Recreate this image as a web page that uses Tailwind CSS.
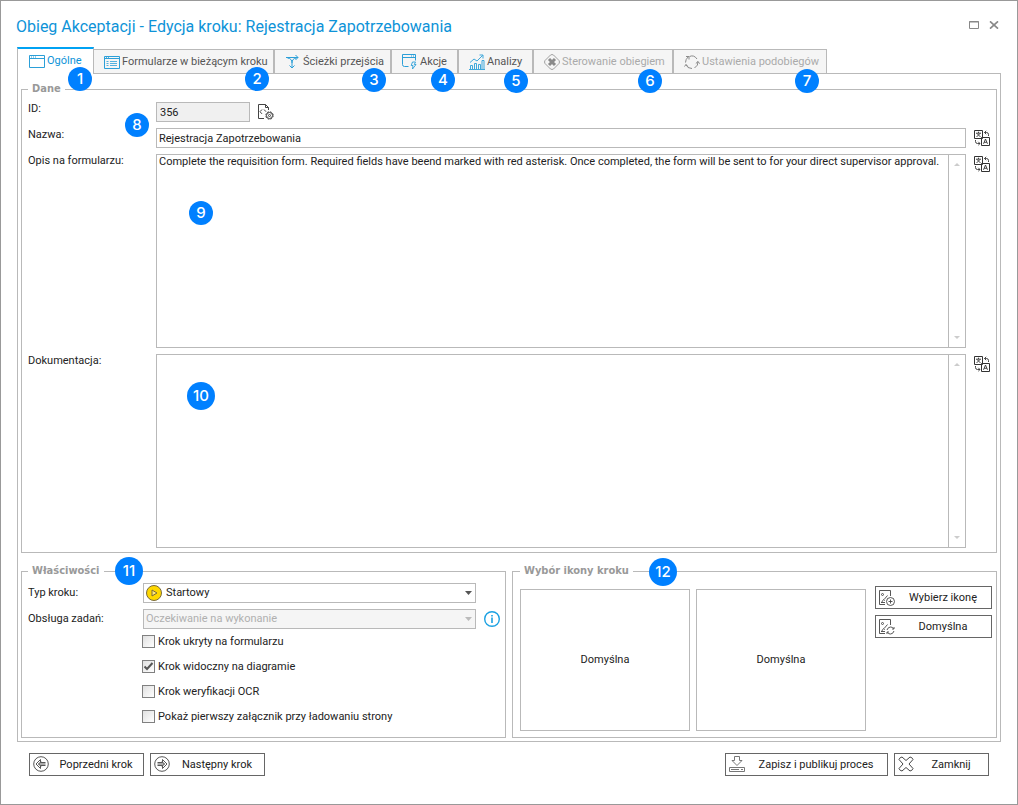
<!DOCTYPE html>
<html lang="pl">
<head>
<meta charset="utf-8">
<title>Obieg Akceptacji - Edycja kroku</title>
<script src="https://cdn.jsdelivr.net/npm/@tailwindcss/browser@4"></script>
</head>
<body class="bg-white">
<svg class="hidden" aria-hidden="true">
  <symbol id="translate" viewBox="0 0 16 16">
    <g fill="none" stroke="currentColor">
      <path d="M.5.5h8v8h-8zM7.500 7.500h8v8h-8z" fill="#fff"/>
      <path stroke-width=".9" d="M2 3.200h5M4.500 1.700V3M3 3.500 6.500 7M6 3.500 2.500 7M9.500 13.800l2-4.800 2 4.800M10.200 12.300h2.600"/>
      <path stroke-width=".9" d="M10.500 2.500h2q2 0 2 2V6M12.200.8 10.500 2.500l1.700 1.700M1.500 10v1.500q0 2 2 2H6M4.300 11.800 6 13.500l-1.700 1.700"/>
    </g>
  </symbol>
</svg>
<div class="flex min-h-screen flex-col border border-[#999] bg-white px-[15px] font-['Roboto',sans-serif] text-[11px] leading-[14px] text-[#222]">
  <header class="flex h-[46px] items-center justify-between pt-1">
    <h1 class="pt-0.5 text-base text-[#0e93d8]">Obieg Akceptacji - Edycja kroku: Rejestracja Zapotrzebowania</h1>
    <div class="mr-0.5 mb-0.5 flex gap-2 text-[#888]">
      <button aria-label="Maksymalizuj" class="grid size-3 place-items-center"><svg class="h-2 w-[10px]" viewBox="0 0 10 8" fill="none" stroke="currentColor"><path d="M.5.5h9v7h-9zM0 1h10"/></svg></button>
      <button aria-label="Zamknij okno" class="grid size-3 place-items-center"><svg class="h-2 w-[10px]" viewBox="0 0 10 8" fill="none" stroke="currentColor" stroke-width="1.600"><path d="M1 .3l8 7.400M9 .3l-8 7.400"/></svg></button>
    </div>
  </header>

  <nav role="tablist" class="mx-px flex items-end whitespace-nowrap text-[#555]">
    <button role="tab" aria-selected="true" class="relative z-10 -mb-px flex h-[27px] w-[77px] items-center gap-0.5 border-x border-t-2 border-x-[#b9b9b9] border-t-[#00a2f3] bg-white pb-0.5 pl-[11px] text-[#0e93d8]">
      <svg class="size-4" viewBox="0 0 16 16" fill="none" stroke="#2b9fd8"><path d="M.5 2.500h15v12H.5zM.5 5.500h15"/><path d="M2 4h1M4 4h1M6 4h1"/></svg>
      <span>Ogólne</span>
      <b class="absolute top-[18px] left-[50px] grid size-6 place-items-center rounded-full bg-[#0080ff] font-['Inter',sans-serif] text-[15px] font-medium text-white">1</b>
    </button>
    <button role="tab" class="relative flex h-6 w-[180px] items-center gap-0.5 border-t border-r border-[#b9b9b9] bg-[#f5f5f5] pl-[10px]">
      <svg class="size-4" viewBox="0 0 16 16" fill="none" stroke="#2b9fd8"><path d="M.5 2.500h15v12H.5zM.5 4.500h15"/><path stroke-width=".8" d="M2 3.500h1M4 3.500h1M2.500 7.500h2M2.500 9.500h2M2.500 11.500h2M6 7.500h7M6 9.500h7M6 11.500h7"/></svg>
      <span>Formularze w bieżącym kroku</span>
      <b class="absolute top-[17px] left-[151px] z-20 grid size-6 place-items-center rounded-full bg-[#0080ff] font-['Inter',sans-serif] text-[15px] font-medium text-white">2</b>
    </button>
    <button role="tab" class="relative flex h-6 w-[117px] items-center gap-0.5 border-x border-t border-[#b9b9b9] bg-[#f5f5f5] pl-[10px]">
      <svg class="size-4" viewBox="0 0 16 16" fill="none" stroke="#2b9fd8"><path d="M1 3.500h12M10.500 1 13 3.500 10.500 6M2.500 4Q7 4.500 7 9v5M4.500 11.500 7 14l2.500-2.500M11.500 4Q7 4.500 7 9"/></svg>
      <span>Ścieżki przejścia</span>
      <b class="absolute top-[18px] left-[87px] z-20 grid size-6 place-items-center rounded-full bg-[#0080ff] font-['Inter',sans-serif] text-[15px] font-medium text-white">3</b>
    </button>
    <button role="tab" class="relative flex h-6 w-[67px] items-center gap-0.5 border-x border-t border-[#b9b9b9] bg-[#f5f5f5] pl-[10px]">
      <svg class="size-4" viewBox="0 0 16 16" fill="none" stroke="#2b9fd8"><path d="M6.500 12.500h-4q-2 0-2-2v-10h13v6M.5 3.500h13M9 2h1M11 2h1"/><path stroke-width=".9" d="M10.500 8h3l-1.200 2.500h1.700L10.500 15l.5-3.500H9.200z"/></svg>
      <span>Akcje</span>
      <b class="absolute top-[18px] left-[39px] z-20 grid size-6 place-items-center rounded-full bg-[#0080ff] font-['Inter',sans-serif] text-[15px] font-medium text-white">4</b>
    </button>
    <button role="tab" class="relative flex h-6 w-[75px] items-center gap-0.5 border-x border-t border-[#b9b9b9] bg-[#f5f5f5] pl-[10px]">
      <svg class="size-4" viewBox="0 0 16 16" fill="none" stroke="#2b9fd8" stroke-width=".9"><path d="M0 15.500h16M1.500 15v-3.500h2V15M5.500 15V9.500h2V15M9.500 15v-4.500h2V15M13 15V6.500h2V15M1 8.500l4-3.500 3 2 5.500-5.500M10.500 1h3.500v3.500"/></svg>
      <span>Analizy</span>
      <b class="absolute top-[19px] left-[45px] z-20 grid size-6 place-items-center rounded-full bg-[#0080ff] font-['Inter',sans-serif] text-[15px] font-medium text-white">5</b>
    </button>
    <button role="tab" class="relative flex h-6 w-[140px] items-center gap-0.5 border-x border-t border-[#b9b9b9] bg-[#f5f5f5] pl-[10px] text-[#aaa]">
      <svg class="size-4" viewBox="0 0 16 16" fill="none" stroke="#8a8a8a"><path stroke-width=".8" d="M6.500 1q1.500-1 3 0L15 6.500q1 1.500 0 3L9.500 15q-1.500 1-3 0L1 9.500q-1-1.500 0-3z"/><path d="M5 5l6 6M11 5l-6 6" stroke-width="3"/></svg>
      <span>Sterowanie obiegiem</span>
      <b class="absolute top-[19px] left-[104px] z-20 grid size-6 place-items-center rounded-full bg-[#0080ff] font-['Inter',sans-serif] text-[15px] font-medium text-white">6</b>
    </button>
    <button role="tab" class="relative flex h-6 w-[154px] items-center gap-0.5 border-x border-t border-[#b9b9b9] bg-[#f5f5f5] pl-[10px] text-[#aaa]">
      <svg class="size-4" viewBox="0 0 16 16" fill="none" stroke="#8a8a8a"><path d="M5.500 2.500Q10 .5 13 5M14 7.500q.5 4-3.500 6.500M8 14.500q-5 0-6-4M1.500 8.500q0-3 2.500-5.500M2 2.500h3v3M11.800 9.500 14 7.500l1.700 2.200M3.800 12.500 2 10.500l-1.500 2"/></svg>
      <span>Ustawienia podobiegów</span>
      <b class="absolute top-[19px] left-[121px] z-20 grid size-6 place-items-center rounded-full bg-[#0080ff] font-['Inter',sans-serif] text-[15px] font-medium text-white">7</b>
    </button>
  </nav>

  <main class="mx-px border border-[#b9b9b9] px-[3px] pt-2 pb-[3px]">
    <fieldset class="relative flex flex-col gap-1.5 border border-[#b9b9b9] px-1.5 pt-1.5 pb-1">
      <legend class="h-[14px] px-1 font-['DejaVu_Sans_Condensed','DejaVu_Sans',sans-serif] font-bold text-[#999]">Dane</legend>
      <div class="relative flex items-start">
        <label for="id" class="w-32">ID:</label>
        <input id="id" readonly value="356" class="h-5 w-[94px] border border-[#b9b9b9] bg-[#f0f0f0] px-[3px]">
        <button aria-label="Właściwości ID" class="mt-0.5 ml-2 text-[#444]"><svg class="size-4" viewBox="0 0 16 16" fill="none" stroke="currentColor"><path d="M6 14.500H.5V.5h7l3 3V6M7.500.5v3h3M4 5.500 2 7.700l2 2.200M6 5.500 8 7.700"/><circle cx="11.500" cy="11.500" r="3.700" stroke-dasharray="1.900 1"/><circle cx="11.500" cy="11.500" r="3"/><circle cx="11.500" cy="11.500" r="1"/></svg></button>
        <b class="absolute top-[11px] left-[97px] grid size-6 place-items-center rounded-full bg-[#0080ff] font-['Inter',sans-serif] text-[15px] font-medium text-white">8</b>
      </div>
      <div class="flex items-start">
        <label for="name" class="w-32">Nazwa:</label>
        <input id="name" value="Rejestracja Zapotrzebowania" class="h-5 min-w-0 flex-1 border border-[#b9b9b9] px-0.5">
        <button aria-label="Tłumacz nazwę" class="mt-0.5 ml-2 text-[#333]"><svg class="size-4"><use href="#translate"/></svg></button>
      </div>
      <div class="relative flex items-start">
        <label for="desc" class="w-32">Opis na formularzu:</label>
        <div class="flex h-[194px] flex-1 border border-[#b9b9b9]">
          <textarea id="desc" class="flex-1 resize-none overflow-hidden px-0.5">Complete the requisition form. Required fields have beend marked with red asterisk. Once completed, the form will be sent to for your direct supervisor approval.</textarea>
          <div class="flex w-[17px] flex-col items-center justify-between border-l border-[#b9b9b9] py-2 text-[#ccc]">
            <svg class="h-[3px] w-[6px]" viewBox="0 0 6 3" fill="currentColor"><path d="M0 3l3-3 3 3z"/></svg>
            <svg class="h-[3px] w-[6px]" viewBox="0 0 6 3" fill="currentColor"><path d="M0 0l3 3 3-3z"/></svg>
          </div>
        </div>
        <button aria-label="Tłumacz opis" class="mt-0.5 ml-2 text-[#333]"><svg class="size-4"><use href="#translate"/></svg></button>
        <b class="absolute top-[47px] left-[161px] grid size-6 place-items-center rounded-full bg-[#0080ff] font-['Inter',sans-serif] text-[15px] font-medium text-white">9</b>
      </div>
      <div class="relative flex items-start">
        <label for="docs" class="w-32">Dokumentacja:</label>
        <div class="flex h-[194px] flex-1 border border-[#b9b9b9]">
          <textarea id="docs" class="flex-1 resize-none overflow-hidden px-0.5"></textarea>
          <div class="flex w-[17px] flex-col items-center justify-between border-l border-[#b9b9b9] py-2 text-[#ccc]">
            <svg class="h-[3px] w-[6px]" viewBox="0 0 6 3" fill="currentColor"><path d="M0 3l3-3 3 3z"/></svg>
            <svg class="h-[3px] w-[6px]" viewBox="0 0 6 3" fill="currentColor"><path d="M0 0l3 3 3-3z"/></svg>
          </div>
        </div>
        <button aria-label="Tłumacz dokumentację" class="mt-0.5 ml-2 text-[#333]"><svg class="size-4"><use href="#translate"/></svg></button>
        <b class="absolute top-7 left-[159px] grid size-7 place-items-center rounded-full bg-[#0080ff] font-['Inter',sans-serif] text-[15px] font-medium text-white">10</b>
      </div>
    </fieldset>

    <div class="mt-[11px] grid grid-cols-2 gap-1.5">
      <fieldset class="relative flex flex-col border border-[#b9b9b9] pt-[5px] pr-1 pl-1.5">
        <legend class="h-[14px] px-1 font-['DejaVu_Sans_Condensed','DejaVu_Sans',sans-serif] font-bold text-[#999]">Właściwości</legend>
        <b class="absolute -top-[21px] left-[93px] grid size-7 place-items-center rounded-full bg-[#0080ff] font-['Inter',sans-serif] text-[15px] font-medium text-white">11</b>
        <div class="flex items-center">
          <label for="type" class="w-[115px]">Typ kroku:</label>
          <div class="relative mr-[25px] flex-1">
            <select id="type" class="block h-5 w-full appearance-none border border-[#b9b9b9] pl-[22px]"><option>Startowy</option></select>
            <svg class="pointer-events-none absolute top-0.5 left-[3px] size-4" viewBox="0 0 16 16" fill="none" stroke="#7a6a3a"><circle cx="8" cy="8" r="7.500" fill="#ffd800"/><path d="M6 5v6l5-3z" fill="#ffe880"/></svg>
            <svg class="pointer-events-none absolute top-2 right-1 h-1 w-[7px]" viewBox="0 0 7 4" fill="#555"><path d="M0 0h7L3.500 4z"/></svg>
          </div>
        </div>
        <div class="mt-1.5 flex items-center">
          <label for="tasks" class="w-[115px]">Obsługa zadań:</label>
          <div class="relative mr-2 flex-1">
            <select id="tasks" disabled class="block h-5 w-full appearance-none border border-[#b9b9b9] bg-[#f5f5f5] pl-0.5 text-[#b0b0b0] opacity-100"><option>Oczekiwanie na wykonanie</option></select>
            <svg class="pointer-events-none absolute top-2 right-1 h-1 w-[7px]" viewBox="0 0 7 4" fill="#bbb"><path d="M0 0h7L3.500 4z"/></svg>
          </div>
          <button aria-label="Informacja"><svg class="size-[17px]" viewBox="0 0 17 17" fill="none" stroke="#1ba1e2"><circle cx="8" cy="8" r="7.300" stroke-width="1.400"/><path d="M8 6.500V12M8 4v1.500" stroke-width="1.600"/></svg></button>
        </div>
        <div class="mt-1.5 ml-[114px] flex flex-col gap-3">
          <label class="flex h-[13px] items-center gap-[3px]"><input type="checkbox" class="size-[13px] appearance-none border border-[#808080] bg-linear-to-br from-[#e0e0e0] to-white">Krok ukryty na formularzu</label>
          <label class="relative flex h-[13px] items-center gap-[3px]"><input type="checkbox" checked class="size-[13px] appearance-none border border-[#808080] bg-linear-to-br from-[#e0e0e0] to-white">Krok widoczny na diagramie<svg class="pointer-events-none absolute top-0 left-0 size-[13px]" viewBox="0 0 13 13" fill="none" stroke="#555" stroke-width="2"><path d="M2.500 6.500 5 9l5.500-6"/></svg></label>
          <label class="flex h-[13px] items-center gap-[3px]"><input type="checkbox" class="size-[13px] appearance-none border border-[#808080] bg-linear-to-br from-[#e0e0e0] to-white">Krok weryfikacji OCR</label>
          <label class="flex h-[13px] items-center gap-[3px]"><input type="checkbox" class="size-[13px] appearance-none border border-[#808080] bg-linear-to-br from-[#e0e0e0] to-white">Pokaż pierwszy załącznik przy ładowaniu strony</label>
        </div>
      </fieldset>

      <fieldset class="relative border border-[#b9b9b9] pt-2 pr-1 pb-1.5 pl-[7px]">
        <legend class="h-[14px] px-1 font-['DejaVu_Sans_Condensed','DejaVu_Sans',sans-serif] font-bold text-[#999]">Wybór ikony kroku</legend>
        <b class="absolute -top-5 left-[136px] grid size-7 place-items-center rounded-full bg-[#0080ff] font-['Inter',sans-serif] text-[15px] font-medium text-white">12</b>
        <div class="flex">
          <div class="mt-[3px] grid h-[142px] flex-1 grid-cols-2 gap-1.5">
            <div class="grid place-items-center border border-[#b9b9b9]">Domyślna</div>
            <div class="grid place-items-center border border-[#b9b9b9]">Domyślna</div>
          </div>
          <div class="ml-[9px] flex w-[117px] flex-col gap-1.5">
            <button class="flex h-[23px] items-center border border-[#666] pl-[3px]">
              <svg class="size-4" viewBox="0 0 16 16" fill="none" stroke="#444" stroke-width=".9"><path d="M6 14.500H.5V.5h11V6"/><circle cx="3.500" cy="4.500" r="1"/><path d="M2 12.500h4M2.500 12.500l2-3 1.500 1M5.500 9l3-3.500"/><circle cx="11.500" cy="11.500" r="4"/><path d="M9.500 11.500h4M11.500 9.500v4"/></svg>
              <span class="flex-1">Wybierz ikonę</span>
            </button>
            <button class="flex h-[23px] items-center border border-[#666] pl-[3px]">
              <svg class="size-4" viewBox="0 0 16 16" fill="none" stroke="#444" stroke-width=".9"><path d="M6 14.500H.5V.5h11V6"/><circle cx="3.500" cy="4.500" r="1"/><path d="M2 12.500h4M2.500 12.500l2-3 1.500 1M5.500 9l3-3.500M8 11q1-3 3.500-3 2 0 3 1.500M15 8v2h-2M15 12q-1 3-3.500 3-2 0-3-1.500M8 15v-2h2"/></svg>
              <span class="flex-1">Domyślna</span>
            </button>
          </div>
        </div>
      </fieldset>
    </div>
  </main>

  <footer class="mt-[11px] flex justify-between px-[13px]">
    <div class="flex gap-1.5">
      <button class="flex h-[23px] w-[115px] items-center border border-[#666] pb-0.5 pl-[3px]">
        <svg class="size-4" viewBox="0 0 16 16" fill="none" stroke="#444" stroke-width=".9"><circle cx="8" cy="8" r="7.300"/><path d="M7.500 3.500 3 8l4.500 4.500V9.500h5M7.500 3.500v3h5M12.500 8H5.500L8 5.500M5.500 8 8 10.500"/></svg>
        <span class="flex-1 pt-0.5">Poprzedni krok</span>
      </button>
      <button class="flex h-[23px] w-[115px] items-center border border-[#666] pb-0.5 pl-[3px]">
        <svg class="size-4" viewBox="0 0 16 16" fill="none" stroke="#444" stroke-width=".9"><circle cx="8" cy="8" r="7.300"/><path d="M8.500 3.500 13 8l-4.500 4.500V9.500h-5M8.500 3.500v3h-5M3.500 8h7L8 5.500M10.500 8 8 10.500"/></svg>
        <span class="flex-1 pt-0.5">Następny krok</span>
      </button>
    </div>
    <div class="flex gap-1.5">
      <button class="flex h-[23px] w-[163px] items-center border border-[#666] pb-0.5 pl-[3px]">
        <svg class="size-4" viewBox="0 0 16 16" fill="none" stroke="#777"><path d="M5.500.5h5v4H13L8 9.500 3 4.500h2.500zM.5 11.500h15v4H.5zM2 13.500h8M12 13.500h2"/></svg>
        <span class="flex-1 pt-0.5">Zapisz i publikuj proces</span>
      </button>
      <button class="flex h-[23px] w-[95px] items-center border border-[#666] pb-0.5 pl-[3px]">
        <svg class="size-4" viewBox="0 0 16 16" fill="none" stroke="#444"><path d="M4 1 8 4.500 12 1q2 0 3 2.500L11 8l4 4.500q-1 2.500-3 2.500L8 11.500 4 15q-2 0-3-2.500L5 8 1 3.500Q2 1 4 1z"/></svg>
        <span class="flex-1 pt-0.5">Zamknij</span>
      </button>
    </div>
  </footer>
</div>
</body>
</html>
